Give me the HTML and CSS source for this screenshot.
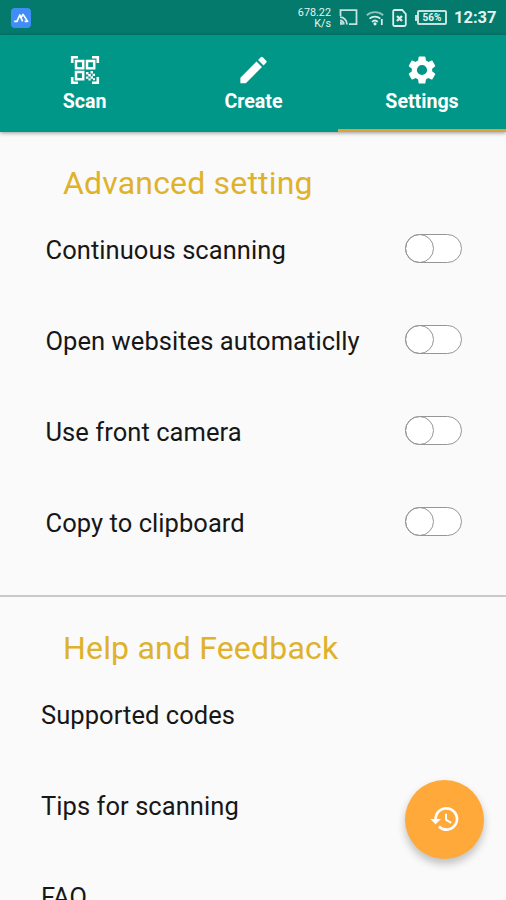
FILE: index.html
```html
<!DOCTYPE html>
<html lang="en">
<head>
<meta charset="utf-8">
<title>Settings</title>
<link rel="stylesheet" href="styles.css">
</head>
<body>
<div class="screen">
  <header class="status">
    <svg class="app-badge" width="20" height="20" viewBox="0 0 20 20"><rect width="20" height="20" rx="4" fill="#3f8df5"/><path d="M3.2 13.4H6L8.8 7l2.8 6.4M10.4 9l1.6-2.6 4.6 7h-3" fill="none" stroke="#fff" stroke-width="1.7" stroke-linejoin="round"/></svg>
    <div class="speed"><span>678.22</span><span>K/s</span></div>
    <svg class="cast" width="19" height="17" viewBox="0 0 19 17" fill="none" stroke="#c4e3df" stroke-width="1.8"><path d="M1.5 7V1.2h16v14H10M1 8.2a7 7 0 0 1 7 7.3M1 11.5a3.8 3.8 0 0 1 3.8 4"/><path d="M1 12.8v3h3A3 3 0 0 0 1 12.8z" fill="#c4e3df" stroke="none"/></svg>
    <svg class="wifi" width="18" height="16" viewBox="0 0 18 16" fill="none" stroke="#d9efec" stroke-width="1.8"><path d="M.8 5.2a12.5 12.5 0 0 1 16.4 0" stroke="#8cc4bd"/><path d="M3.5 8.6a8.2 8.2 0 0 1 10.8 0M6 11.8a4.3 4.3 0 0 1 5.8 0M15.8 9v6"/><circle cx="9" cy="13.8" r="1.6" fill="#d9efec" stroke="none"/></svg>
    <svg class="sim" width="15" height="18" viewBox="0 0 15 18" fill="none" stroke="#d9efec" stroke-width="1.8"><path d="M1.2 2.5Q1.2 1 2.7 1h7.5l3.6 4v10.5q0 1.5-1.5 1.5H2.7q-1.5 0-1.5-1.5z"/><path d="m5 7 5 5M10 7l-5 5" stroke-width="2.4"/></svg>
    <div class="battery"><i></i><span>56%</span></div>
    <span class="clock">12:37</span>
  </header>
  <nav class="tabs">
    <div class="tab">
      <svg width="30" height="30" viewBox="0 0 30 30" fill="none" stroke="#fff"><path d="M2.2 8V2.2H8M22 2.2h5.8V8M2.2 22v5.8H8M22 27.8h5.8V22" stroke-width="2.6"/><path d="M6 6h7.2v7.2H6zM17 6h7.2v7.2H17zM6 17h7.2v7.2H6z" stroke-width="2.5"/><path d="M16 17h2.5v2.5H16zM20.5 16h2.5v2.5h-2.5zM18.3 19h2.5v2.5h-2.5zM22.5 18.8H25v2.3h-2.5zM16 21.4h2.4v2.4H16zM20.6 21.3H23v2.4h-2.4zM18.4 23.5h2.3v2h-2.3zM23 23.3h2v2h-2z" fill="#fff" stroke="none"/></svg>
      <span>Scan</span>
    </div>
    <div class="tab">
      <svg width="35" height="35" viewBox="0 0 24 24" fill="#fff"><path d="M3 17.25V21h3.75L17.81 9.94l-3.75-3.75L3 17.25zM20.71 7.04a1 1 0 0 0 0-1.41l-2.34-2.34a1 1 0 0 0-1.41 0l-1.83 1.83 3.75 3.75 1.83-1.83z"/></svg>
      <span>Create</span>
    </div>
    <div class="tab active">
      <svg width="34" height="34" viewBox="0 0 24 24" fill="#fff"><path d="M19.14 12.94c.04-.3.06-.61.06-.94s-.02-.64-.07-.94l2.03-1.58a.49.49 0 0 0 .12-.61l-1.92-3.32a.49.49 0 0 0-.59-.22l-2.39.96a7.03 7.03 0 0 0-1.62-.94l-.36-2.54A.48.48 0 0 0 13.92 2.4h-3.84a.48.48 0 0 0-.47.41l-.36 2.54c-.59.24-1.13.57-1.62.94l-2.39-.96a.48.48 0 0 0-.59.22L2.74 8.87a.47.47 0 0 0 .12.61l2.03 1.58c-.05.3-.09.63-.09.94s.02.64.07.94l-2.03 1.58a.49.49 0 0 0-.12.61l1.92 3.32c.12.22.37.29.59.22l2.39-.96c.5.38 1.03.7 1.62.94l.36 2.54c.05.24.24.41.48.41h3.84c.24 0 .44-.17.47-.41l.36-2.54c.59-.24 1.13-.56 1.62-.94l2.39.96c.22.08.47 0 .59-.22l1.92-3.32a.47.47 0 0 0-.12-.61l-2.01-1.58zM12 15.6a3.6 3.6 0 1 1 0-7.2 3.6 3.6 0 0 1 0 7.2z"/></svg>
      <span>Settings</span>
    </div>
  </nav>
  <main>
    <section class="advanced">
      <h2>Advanced setting</h2>
      <div class="row"><span>Continuous scanning</span><div class="switch"></div></div>
      <div class="row"><span>Open websites automaticlly</span><div class="switch"></div></div>
      <div class="row"><span>Use front camera</span><div class="switch"></div></div>
      <div class="row"><span>Copy to clipboard</span><div class="switch"></div></div>
    </section>
    <section class="help">
      <h2>Help and Feedback</h2>
      <div class="row">Supported codes</div>
      <div class="row">Tips for scanning</div>
      <div class="row">FAQ</div>
    </section>
  </main>
  <div class="fab"><svg width="32" height="32" viewBox="0 0 24 24" fill="#fff"><path d="M13 3a9 9 0 0 0-9 9H1l3.89 3.89.07.14L9 12H6a7 7 0 1 1 2.06 4.94l-1.42 1.42A9 9 0 1 0 13 3zm-1 5v5l4.28 2.54.72-1.21-3.5-2.08V8H12z"/></svg></div>
</div>
</body>
</html>
```
FILE: styles.css
```css
*, *::before { box-sizing: border-box; }
body { margin: 0; background: #fafafa; font-family: Roboto, "Liberation Sans", sans-serif; }
.screen { position: relative; width: 506px; height: 900px; overflow: hidden; }
.status { height: 35px; background: #047a6c; display: flex; align-items: center; padding: 0 10px 0 11px; color: #e3f4f1; }
.app-badge { margin-right: auto; }
.speed { display: flex; flex-direction: column; align-items: flex-end; font-size: 10.8px; line-height: 11px; width: 36px; }
.cast { margin-left: 8px; }
.wifi { margin-left: 8px; }
.sim { margin-left: 8px; }
.battery { position: relative; margin-left: 10px; width: 30px; height: 15px; border: 2px solid #c4e3df; border-radius: 2px; display: flex; align-items: center; justify-content: center; font-size: 10px; font-weight: 700; }
.battery i { position: absolute; left: -4px; top: 3px; width: 3px; height: 6px; background: #c4e3df; }
.clock { margin-left: 7px; width: 42px; font-size: 16.5px; font-weight: 700; white-space: nowrap; }
.tabs { position: relative; display: grid; grid-template-columns: 169px 169px 168px; height: 97px; background: #009688; box-shadow: 0 1px 4px rgba(0,0,0,.4); }
.tab { display: flex; flex-direction: column; align-items: center; color: #fff; font-size: 19.6px; line-height: 24px; font-weight: 700; padding-top: 17px; }
.tab svg { height: 36px; }
.tab span { margin-top: 2px; }
.active { border-bottom: 3px solid #dfa23a; }
h2 { margin: 0; padding-left: 63px; font-size: 32px; line-height: 40px; font-weight: 400; color: #dfb22b; letter-spacing: .18px; }
.advanced { height: 465px; padding-top: 31px; border-bottom: 2px solid #c8c9c8; }
.row { display: flex; align-items: center; justify-content: space-between; height: 91px; font-size: 25.5px; color: #171717; letter-spacing: .06px; }
.advanced .row { padding: 0 44px 0 45.5px; }
.advanced .row span { padding-top: 2px; }
.switch { width: 57px; height: 29px; border: 1px solid #969696; border-radius: 15px; background: #fff; }
.switch::before { content: ""; display: block; width: 29px; height: 29px; margin: -1px; border: 1px solid #969696; border-radius: 50%; }
.help { padding-top: 31px; }
.help .row { padding-left: 41px; }
.help h2 + .row { margin-top: 1px; }
.fab { position: absolute; left: 405px; top: 779.5px; width: 79px; height: 79px; border-radius: 50%; background: #ffa93b; display: flex; align-items: center; justify-content: center; box-shadow: 0 5px 9px rgba(0,0,0,.24); }
```
